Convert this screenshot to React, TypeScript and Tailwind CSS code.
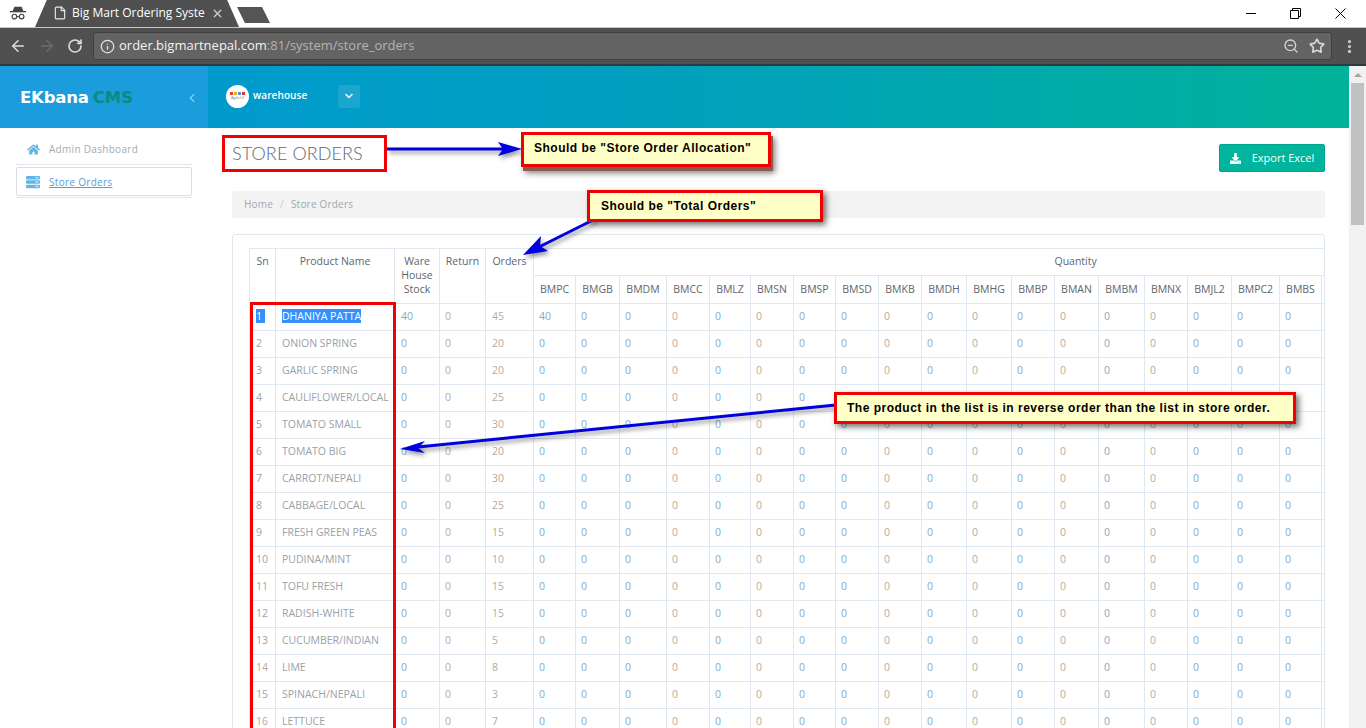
import React from 'react';
import { ArrowLeft, ArrowRight, ChevronDown, ChevronLeft, EllipsisVertical, File, Info, RotateCw, Star, X, ZoomOut } from 'lucide-react';
import { FaDownload, FaHome, FaServer } from 'react-icons/fa';

const blue = 'text-[#85a9cc]';
const orange = 'text-[#b9a99d]';

const stores = [
  { name: 'BMPC', w: 'w-[42px]', tint: blue },
  { name: 'BMGB', w: 'w-[44px]', tint: blue },
  { name: 'BMDM', w: 'w-[47px]', tint: blue },
  { name: 'BMCC', w: 'w-[43px]', tint: orange },
  { name: 'BMLZ', w: 'w-[41px]', tint: blue },
  { name: 'BMSN', w: 'w-[43px]', tint: orange },
  { name: 'BMSP', w: 'w-[42px]', tint: blue },
  { name: 'BMSD', w: 'w-[43px]', tint: blue },
  { name: 'BMKB', w: 'w-[43px]', tint: orange },
  { name: 'BMDH', w: 'w-[45px]', tint: blue },
  { name: 'BMHG', w: 'w-[45px]', tint: orange },
  { name: 'BMBP', w: 'w-[43px]', tint: blue },
  { name: 'BMAN', w: 'w-[44px]', tint: orange },
  { name: 'BMBM', w: 'w-[46px]', tint: blue },
  { name: 'BMNX', w: 'w-[43px]', tint: orange },
  { name: 'BMJL2', w: 'w-[44px]', tint: blue },
  { name: 'BMPC2', w: 'w-[48px]', tint: blue },
  { name: 'BMBS', w: 'w-[42px]', tint: blue },
];

const products = [
  ['DHANIYA PATTA', 40, 45],
  ['ONION SPRING', 0, 20],
  ['GARLIC SPRING', 0, 20],
  ['CAULIFLOWER/LOCAL', 0, 25],
  ['TOMATO SMALL', 0, 30],
  ['TOMATO BIG', 0, 20],
  ['CARROT/NEPALI', 0, 30],
  ['CABBAGE/LOCAL', 0, 25],
  ['FRESH GREEN PEAS', 0, 15],
  ['PUDINA/MINT', 0, 10],
  ['TOFU FRESH', 0, 15],
  ['RADISH-WHITE', 0, 15],
  ['CUCUMBER/INDIAN', 0, 5],
  ['LIME', 0, 8],
  ['SPINACH/NEPALI', 0, 3],
  ['LETTUCE', 0, 7],
] as const;

function BrowserBar() {
  return (
    <div className="font-['Open_Sans',sans-serif]">
      <div className="h-[28px] bg-white flex items-end border-b border-[#c4c4c4]">
        <div className="w-[35px] h-[28px] flex items-center justify-center">
          <svg width="18" height="16" viewBox="0 0 20 16" fill="none" className="text-[#444]">
            <path d="M6 1h8l2 5H4z" fill="currentColor" />
            <path d="M1 6.5h18" stroke="currentColor" strokeWidth="1.5" />
            <circle cx="6" cy="12" r="2.6" stroke="currentColor" strokeWidth="1.3" />
            <circle cx="14" cy="12" r="2.6" stroke="currentColor" strokeWidth="1.3" />
            <path d="M8.6 12h2.8" stroke="currentColor" strokeWidth="1.2" />
          </svg>
        </div>
        <div className="w-[204px] h-[28px] bg-[#505050] [clip-path:polygon(0_100%,6%_0,94%_0,100%_100%)] flex items-center pl-[18px] text-white text-[12px]">
          <File size={14} className="text-[#e8e8e8] shrink-0" />
          <span className="ml-[5px] w-[133px] overflow-hidden whitespace-nowrap">Big Mart Ordering System</span>
          <X size={13} className="ml-[6px] text-[#c8c8c8] shrink-0" strokeWidth={2.5} />
        </div>
        <div className="ml-[-2px] mb-[4px] w-[33px] h-[16px] bg-[#555] [clip-path:polygon(0_0,76%_0,100%_100%,24%_100%)]"></div>
        <div className="flex-1"></div>
        <div className="h-[28px] pr-[3px] flex items-center text-black">
          <div className="w-[45px] flex justify-center"><div className="w-[10px] h-px bg-black"></div></div>
          <div className="w-[45px] flex justify-center">
            <svg width="11" height="11" viewBox="0 0 11 11" fill="none" stroke="currentColor">
              <path d="M.5 2.5h8v8h-8zM2.5 2.5v-2h8v8h-2" />
            </svg>
          </div>
          <div className="w-[45px] flex justify-center">
            <svg width="11" height="11" viewBox="0 0 11 11" stroke="currentColor"><path d="M.5.5l10 10M10.5.5l-10 10" /></svg>
          </div>
        </div>
      </div>
      <div className="h-[38px] bg-[#505050] border-b-2 border-[#2f3a3e] flex items-center pl-[9px] pr-[8px]">
        <ArrowLeft size={18} className="text-[#dcdcdc]" />
        <ArrowRight size={18} className="ml-[11px] text-[#6d6d6d]" />
        <RotateCw size={16} className="ml-[11px] text-[#dcdcdc]" strokeWidth={2.5} />
        <div className="ml-[10px] flex-1 h-[28px] bg-[#636363] border border-[#3f3f3f] rounded-[3px] flex items-center pl-[6px] pr-[6px] text-[13px]">
          <Info size={15} className="text-[#e4e4e4]" />
          <span className="ml-[4px] text-[#f2f2f2]">order.bigmartnepal.com</span>
          <span className="text-[#b4b4b4]">:81/system/store_orders</span>
          <div className="flex-1"></div>
          <ZoomOut size={16} className="text-[#d4d4d4]" />
          <Star size={16} className="ml-[10px] text-[#d8d8d8]" strokeWidth={2.5} />
        </div>
        <EllipsisVertical size={17} className="ml-[9px] text-[#cfcfcf]" strokeWidth={2.5} />
      </div>
    </div>
  );
}

function Sidebar() {
  return (
    <aside className="w-[208px] shrink-0 pl-[16px] pr-[16px] font-['Open_Sans',sans-serif] text-[10px] tracking-[0.3px]">
      <div className="h-[37px] pt-[6px] border-b border-[#dfe6ee] flex items-center pl-[11px] text-[#a4abb3]">
        <FaHome size={13} className="text-[#62b6e6]" />
        <span className="ml-[9px]">Admin Dashboard</span>
      </div>
      <div className="mt-[2px] h-[29px] pt-[1px] border border-[#d8dee6] rounded-[2px] flex items-center pl-[9px] text-[#5b9bd8]">
        <FaServer size={14} className="text-[#62b6e6]" />
        <span className="ml-[9px] underline">Store Orders</span>
      </div>
      <div className="mt-[1px] border-b border-[#dfe6ee]"></div>
    </aside>
  );
}

function StoreTable() {
  const cell = 'border border-[#dfe7f0] h-[27px] text-[10.5px] font-normal align-middle';
  const head = 'border border-[#dfe7f0] text-[#5d6670] text-[10.5px] font-normal align-top pt-[5px] leading-[14px] text-center';
  return (
    <table className="table-fixed border-collapse w-[1368px] font-['Open_Sans',sans-serif]">
      <colgroup>
        <col className="w-[26px]" />
        <col className="w-[119px]" />
        <col className="w-[45px]" />
        <col className="w-[46px]" />
        <col className="w-[48px]" />
        {stores.map((s) => <col key={s.name} className={s.w} />)}
        <col className="w-[296px]" />
      </colgroup>
      <thead>
        <tr className="h-[27px]">
          <th rowSpan={2} className={head}>Sn</th>
          <th rowSpan={2} className={head}>Product Name</th>
          <th rowSpan={2} className={head}>Ware<br />House<br />Stock</th>
          <th rowSpan={2} className={head}>Return</th>
          <th rowSpan={2} className={head}>Orders</th>
          <th colSpan={19} className="border border-[#dfe7f0] text-[#5d6670] text-[10.5px] font-normal text-center">Quantity</th>
        </tr>
        <tr className="h-[28px]">
          {stores.map((s) => (
            <th key={s.name} className="border border-[#dfe7f0] text-[#5d6670] text-[10.5px] font-normal text-center">{s.name}</th>
          ))}
          <th className="border border-[#dfe7f0]"></th>
        </tr>
      </thead>
      <tbody>
        {products.map(([name, stock, orders], i) => (
          <tr key={name}>
            <td className={`${cell} px-[6px] ${i === 13 || i === 15 ? orange : 'text-[#9aa4ad]'}`}>
              {i === 0 ? <span className="bg-[#3390ff] text-white pr-[3px]">1</span> : i + 1}
            </td>
            <td className={`${cell} px-[6px] text-[#9aa1a8] whitespace-nowrap`}>
              {i === 0 ? <span className="bg-[#3390ff] text-white">{name}</span> : name}
            </td>
            <td className={`${cell} px-[6px] ${blue}`}>{stock}</td>
            <td className={`${cell} px-[5px] ${orange}`}>0</td>
            <td className={`${cell} px-[6px] ${orange}`}>{orders}</td>
            {stores.map((s, j) => (
              <td key={s.name} className={`${cell} px-[5px] ${s.tint}`}>{i === 0 && j === 0 ? 40 : 0}</td>
            ))}
            <td className={cell}></td>
          </tr>
        ))}
      </tbody>
    </table>
  );
}

function Callouts() {
  const note = "absolute bg-[#ffffc8] border-[3px] border-[#f00000] flex items-center font-['Liberation_Sans',sans-serif] font-bold text-[12px] tracking-[0.5px] text-black whitespace-nowrap";
  return (
    <div className="absolute inset-0 pointer-events-none overflow-hidden">
      <div className="absolute left-[222px] top-[135px] w-[165px] h-[37px] border-[3px] border-[#f00000]"></div>
      <div className="absolute left-[250px] top-[302px] w-[146px] h-[440px] border-[3px] border-[#f00000]"></div>
      <svg width="1366" height="728" className="absolute left-0 top-0 drop-shadow-[2px_3px_2px_rgba(0,0,0,0.4)]">
        <path d="M387 149H505" stroke="#0000e0" strokeWidth="3" />
        <path d="M522 149L498 142L503 149L498 156Z" fill="#0000e0" />
        <path d="M595 219L537 248" stroke="#0000e0" strokeWidth="3" />
        <path d="M523 255L548 251L540 246L541 236Z" fill="#0000e0" />
        <path d="M836 405L418 447" stroke="#0000e0" strokeWidth="3" />
        <path d="M400 449L425 441L418 448L425 453Z" fill="#0000e0" />
      </svg>
      <div className={`${note} left-[521px] top-[132px] w-[250px] h-[35px] pl-[10px] pb-[4px] shadow-[2px_4px_0_#8a5a50,4px_6px_6px_rgba(0,0,0,0.5)]`}>Should be "Store Order Allocation"</div>
      <div className={`${note} left-[587px] top-[190px] w-[236px] h-[32px] pl-[11px] shadow-[3px_3px_6px_rgba(0,0,0,0.55)]`}>Should be "Total Orders"</div>
      <div className={`${note} left-[834px] top-[392px] w-[462px] h-[32px] pl-[10px] shadow-[3px_3px_6px_rgba(0,0,0,0.55)]`}>The product in the list is in reverse order than the list in store order.</div>
    </div>
  );
}

export default function App() {
  return (
    <div className="relative h-[728px] overflow-hidden bg-white flex flex-col">
      <BrowserBar />
      <div className="flex flex-1 min-h-0">
        <div className="flex-1 min-w-0">
          {/* Top bar */}
          <header className="h-[62px] flex bg-gradient-to-r from-[#0098d5] via-[#00a0bd] to-[#00b299]">
            <div className="w-[208px] shrink-0 bg-[#1b9cdc] flex items-center pl-[20px] pt-[2px] font-['DejaVu_Sans',sans-serif] font-bold">
              <span className="text-white text-[16.5px] tracking-[-0.2px]">EKbana</span>
              <span className="ml-[4px] text-[#0c8b7d] text-[16.5px]">CMS</span>
              <ChevronLeft size={14} className="ml-[52px] text-[#8fd0ee]" />
            </div>
            <div className="flex items-center pl-[18px] pb-[2px] font-['Open_Sans',sans-serif]">
              <div className="w-[23px] h-[23px] rounded-full bg-white flex flex-col items-center justify-center">
                <div className="flex gap-[1px]">
                  <div className="w-[3px] h-[3px] bg-[#e0452c]"></div>
                  <div className="w-[3px] h-[3px] bg-[#f0a820]"></div>
                  <div className="w-[3px] h-[3px] bg-[#3f9ae0]"></div>
                  <div className="w-[3px] h-[3px] bg-[#d9342b]"></div>
                </div>
                <span className="text-[4px] leading-[6px] text-[#777]">AgileUI</span>
              </div>
              <span className="ml-[4px] mb-[1px] text-white text-[10px] font-semibold tracking-[0.1px]">warehouse</span>
              <div className="ml-[31px] w-[22px] h-[23px] rounded-[3px] bg-white/10 flex items-center justify-center">
                <ChevronDown size={12} className="text-white" strokeWidth={3} />
              </div>
            </div>
          </header>

          <div className="flex">
            <Sidebar />
            <main className="flex-1 min-w-0 pl-[24px] pr-[24px] font-['Open_Sans',sans-serif]">
              <div className="h-[63px] flex items-start justify-between">
                <h1 className="mt-[12px] font-['Lato',sans-serif] font-light text-[18px] tracking-[0.1px] text-[#5e6873]">STORE ORDERS</h1>
                <button className="mt-[16px] w-[106px] h-[28px] bg-[#00b59c] border border-[#00a58e] rounded-[2px] text-white text-[11px] flex items-center justify-center gap-[11px]">
                  <FaDownload size={11} />
                  Export Excel
                </button>
              </div>
              <nav className="h-[27px] bg-[#f3f3f3] rounded-[3px] flex items-center pl-[12px] text-[10px] tracking-[0.2px] text-[#a0a8b0]">
                <span>Home</span>
                <span className="mx-[7px] text-[#c8c8c8]">/</span>
                <span>Store Orders</span>
              </nav>
              <section className="mt-[16px] border border-[#dfe7f0] rounded-[3px] pl-[16px] pt-[13px] overflow-hidden">
                <StoreTable />
              </section>
            </main>
          </div>
        </div>

        {/* Scrollbar */}
        <div className="w-[17px] shrink-0 bg-[#f1f1f1] flex flex-col items-center">
          <div className="h-[17px] flex items-center justify-center">
            <div className="w-0 h-0 border-l-[4px] border-r-[4px] border-b-[4px] border-l-transparent border-r-transparent border-b-[#a3a3a3]"></div>
          </div>
          <div className="w-[13px] h-[142px] bg-[#c1c1c1]"></div>
        </div>
      </div>
      <Callouts />
    </div>
  );
}
